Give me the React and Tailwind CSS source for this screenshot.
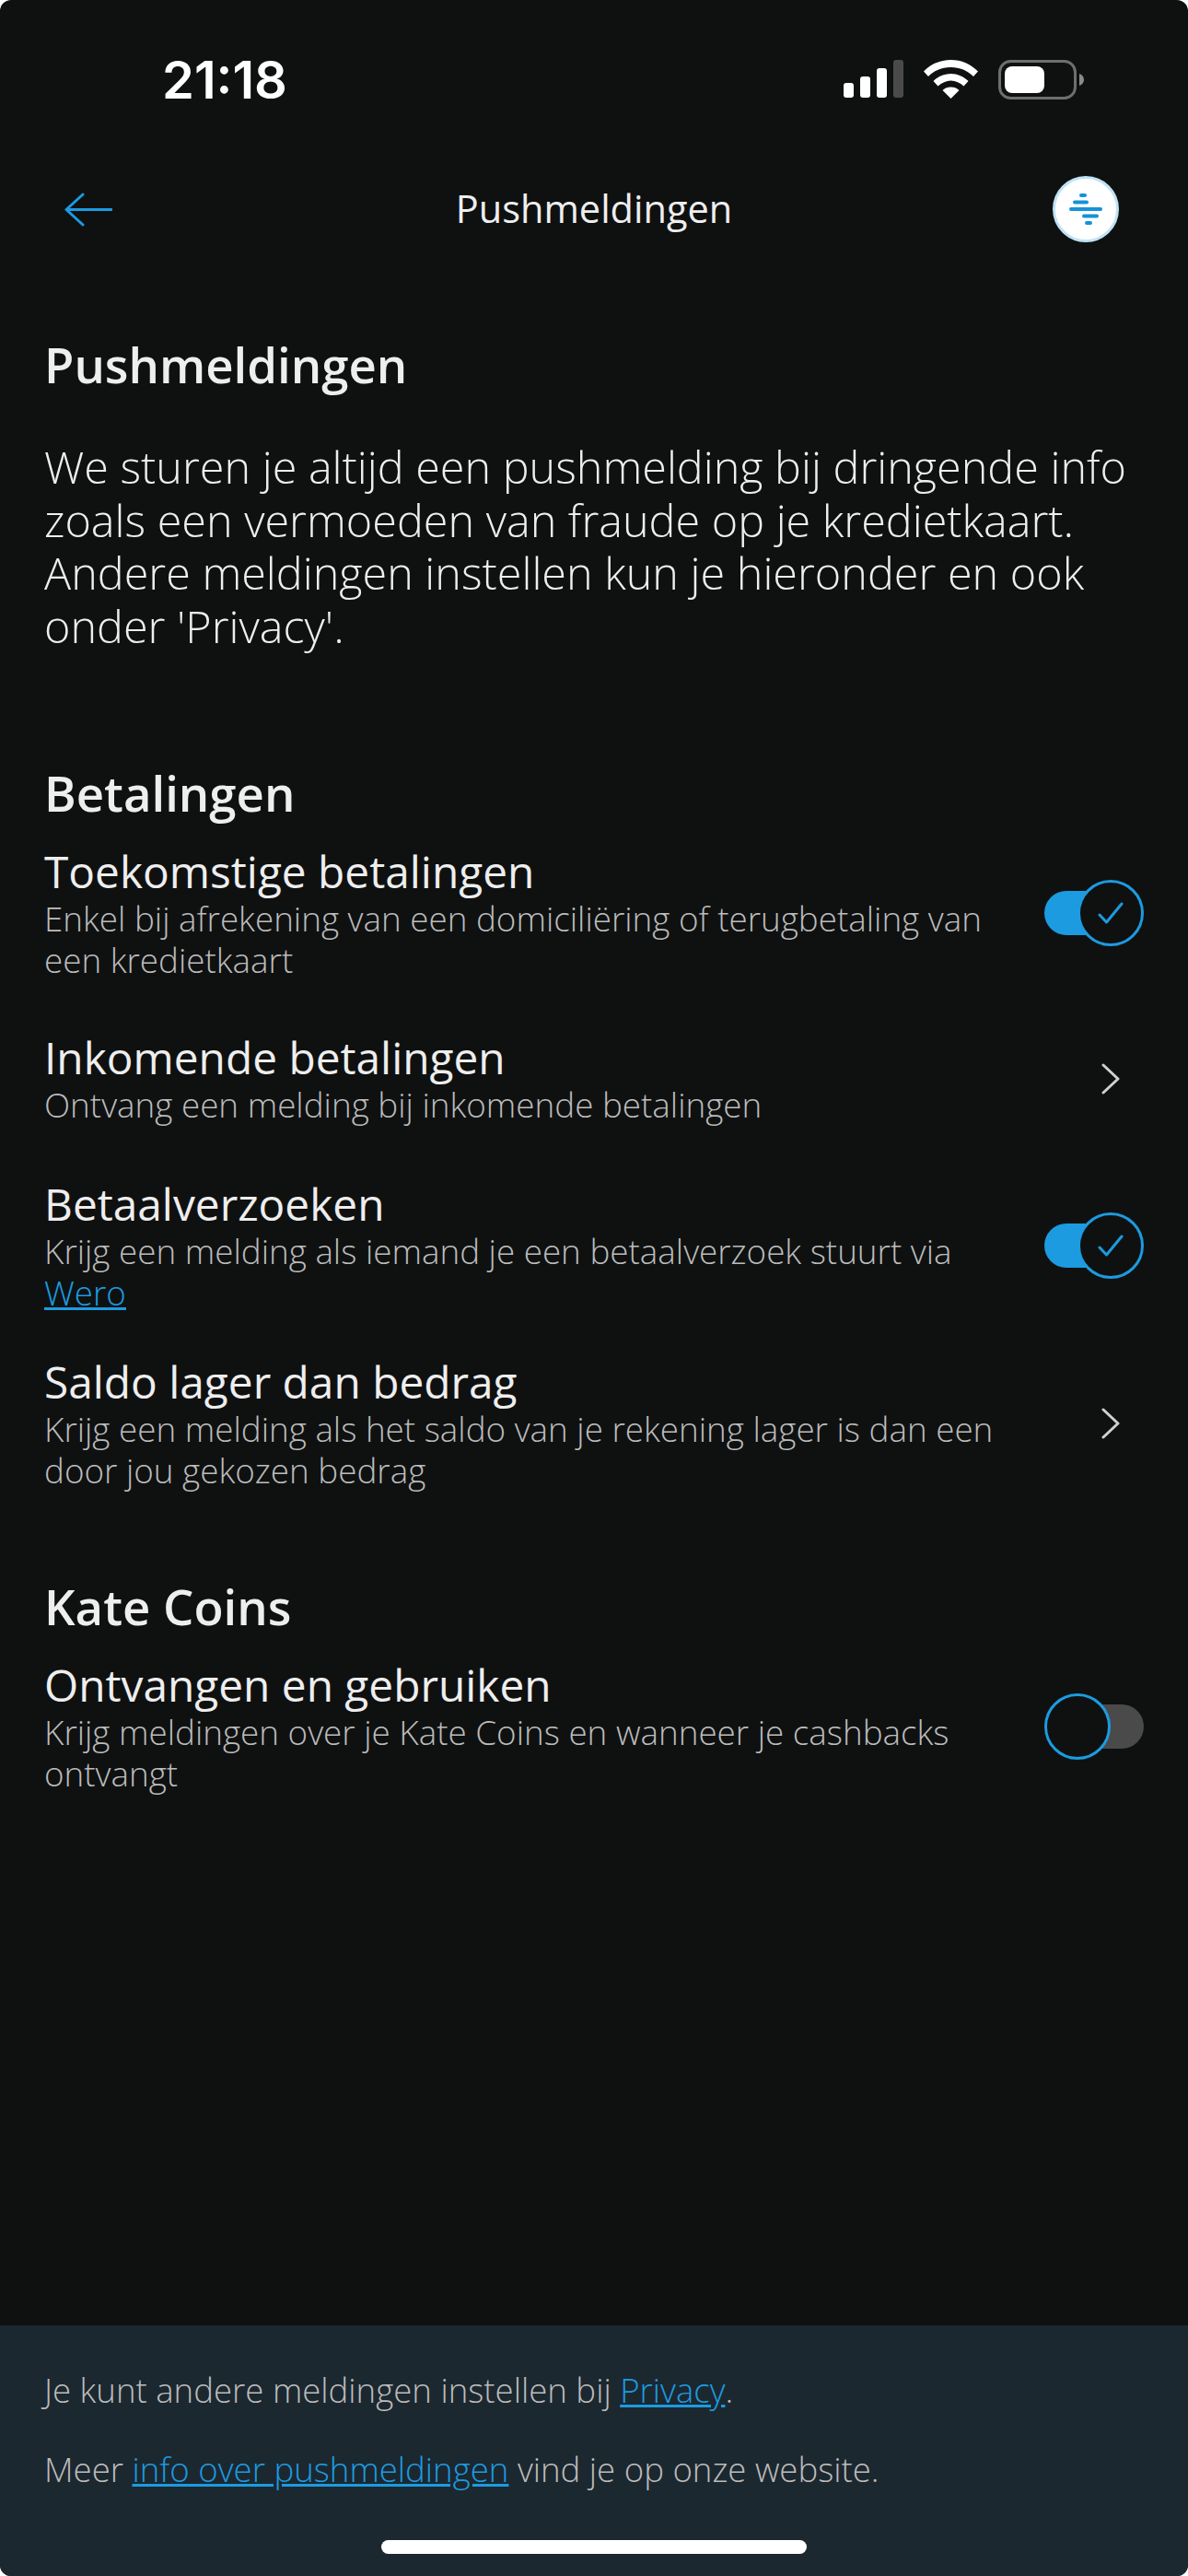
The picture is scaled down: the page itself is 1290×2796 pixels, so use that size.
import React from 'react';

function StatusBar() {
  return (
    <div className="h-[132px] pt-[58px] pl-[176px] pr-[113px] flex items-start justify-between">
      <span className="text-[56px] leading-[58px] font-semibold text-white font-['Inter',sans-serif]">21:18</span>
      <div className="flex items-start gap-[22px] pt-[7px]">
        <svg width="65" height="42" viewBox="0 0 65 42">
          <rect x="0" y="25" width="11" height="16" rx="3" fill="#fff" />
          <rect x="18" y="18" width="11" height="23" rx="3" fill="#fff" />
          <rect x="36" y="9" width="11" height="32" rx="3" fill="#fff" />
          <rect x="54" y="0" width="11" height="41" rx="3" fill="#4a4a4a" />
        </svg>
        <svg width="59" height="42" viewBox="0 0 59 42">
          <path d="M29.5 0C18 0 8 4.500 0 12.500L5 18C11.500 11.500 20 8 29.500 8C39 8 47.500 11.500 54 18L59 12.500C51 4.500 41 0 29.500 0Z" fill="#fff" />
          <path d="M29.500 15C22.500 15 15.500 18 10.500 23L15.500 28.500C19.500 25 24.500 22.500 29.500 22.500C34.500 22.500 39.500 25 43.500 28.500L48.500 23C43.500 18 36.500 15 29.500 15Z" fill="#fff" />
          <path d="M29.500 29.500C26 29.500 23 30.500 20.500 33L29.500 42L38.500 33C36 30.500 33 29.500 29.500 29.500Z" fill="#fff" />
        </svg>
        <svg width="93" height="43" viewBox="0 0 93 43">
          <rect x="1.500" y="1.500" width="82" height="40" rx="12" fill="none" stroke="#6e6e6e" strokeWidth="3" />
          <rect x="7" y="7" width="43" height="29" rx="8" fill="#fff" />
          <path d="M88 15C91 16 93 18.500 93 21.500C93 24.500 91 27 88 28Z" fill="#8a8a8a" />
        </svg>
      </div>
    </div>
  );
}

function NavBar() {
  return (
    <div className="h-[190px] grid grid-cols-[1fr_auto_1fr] items-center pl-[75px] pr-[75px]">
      <svg width="52" height="37" viewBox="0 0 52 37" fill="none" stroke="#1c9be0" strokeWidth="3" strokeLinecap="round" strokeLinejoin="round" className="ml-[-5px]">
        <path d="M2 18.500H51M20 2L2 18.500L20 35" />
      </svg>
      <span className="text-[41.500px] leading-[50px] text-[#eeeeee] mb-[3px]">Pushmeldingen</span>
      <div className="justify-self-end w-[72px] h-[72px] rounded-full bg-white border-[3px] border-[#bfe3f5] flex items-center justify-center">
        <svg width="36" height="34" viewBox="0 0 36 34">
          <rect x="11" y="0" width="8" height="4" rx="2" fill="#1592d8" />
          <rect x="4" y="7.500" width="17" height="4" rx="2" fill="#1592d8" />
          <rect x="0" y="15" width="36" height="4" rx="2" fill="#1592d8" />
          <rect x="14" y="22.500" width="18" height="4" rx="2" fill="#1592d8" />
          <rect x="17" y="30" width="8" height="4" rx="2" fill="#1592d8" />
        </svg>
      </div>
    </div>
  );
}

function Toggle({ on }) {
  return (
    <div className="w-[108px] h-[72px] relative shrink-0 mb-[5px]">
      <div className={on ? 'absolute left-0 top-[12px] w-[60px] h-[48px] rounded-l-full bg-[#1c9be0]' : 'absolute right-0 top-[12px] w-[60px] h-[48px] rounded-r-full bg-[#4a4a4a]'} />
      <div className={on ? 'absolute right-0 top-0 w-[72px] h-[72px] rounded-full border-[3px] border-[#1c9be0] bg-[#0f1111] flex items-center justify-center' : 'absolute left-0 top-0 w-[72px] h-[72px] rounded-full border-[3px] border-[#1c9be0] bg-[#0f1111]'}>
        {on && (
          <svg width="28" height="26" viewBox="0 0 28 26" fill="none" stroke="#1c9be0" strokeWidth="3" strokeLinecap="round" strokeLinejoin="round">
            <path d="M2 15L9.500 23L26 3" />
          </svg>
        )}
      </div>
    </div>
  );
}

function Row({ title, children, control, className }) {
  return (
    <div className={'flex items-center justify-between ' + className}>
      <div>
        <div className="text-[47.800px] leading-[50px] text-[#eeeeee]">{title}</div>
        <div className="text-[36.800px] leading-[45px] text-[#bcbcbc] font-light mt-[4px]">{children}</div>
      </div>
      {control}
    </div>
  );
}

function Chevron() {
  return (
    <svg width="20" height="34" viewBox="0 0 20 34" fill="none" stroke="#d0d0d0" strokeWidth="3" strokeLinecap="round" strokeLinejoin="round" className="mr-[26px] mb-[4px]">
      <path d="M2 2L18 17L2 32" />
    </svg>
  );
}

function App() {
  return (
    <div className="w-[1290px] h-[2796px] bg-white">
      <div className="h-full flex flex-col bg-[#0f1111] font-['Open_Sans',sans-serif] overflow-hidden rounded-[12px]">
        <StatusBar />
        <NavBar />
        <main className="flex-1 px-[48px]">
          <h1 className="text-[52.700px] leading-[60px] font-semibold text-[#eeeeee] mt-[44px]">Pushmeldingen</h1>
          <p className="text-[48.500px] leading-[57.500px] text-[#eeeeee] font-light mt-[52px]">
            We sturen je altijd een pushmelding bij dringende info<br />
            zoals een vermoeden van fraude op je kredietkaart.<br />
            Andere meldingen instellen kun je hieronder en ook<br />
            onder 'Privacy'.
          </p>
          <h2 className="text-[52.700px] leading-[60px] font-semibold text-[#eeeeee] mt-[123px]">Betalingen</h2>
          <Row title="Toekomstige betalingen" control={<Toggle on />} className="mt-[30px]">
            Enkel bij afrekening van een domiciliëring of terugbetaling van<br />een kredietkaart
          </Row>
          <Row title="Inkomende betalingen" control={<Chevron />} className="mt-[58px]">
            Ontvang een melding bij inkomende betalingen
          </Row>
          <Row title="Betaalverzoeken" control={<Toggle on />} className="mt-[60px]">
            Krijg een melding als iemand je een betaalverzoek stuurt via<br /><a className="text-[#1c9be0] underline">Wero</a>
          </Row>
          <Row title="Saldo lager dan bedrag" control={<Chevron />} className="mt-[49px]">
            Krijg een melding als het saldo van je rekening lager is dan een<br />door jou gekozen bedrag
          </Row>
          <h2 className="text-[52.700px] leading-[60px] font-semibold text-[#eeeeee] mt-[95px]">Kate Coins</h2>
          <Row title="Ontvangen en gebruiken" control={<Toggle />} className="mt-[30px]">
            Krijg meldingen over je Kate Coins en wanneer je cashbacks<br />ontvangt
          </Row>
        </main>
        <footer className="h-[272px] bg-[#1c2830] px-[48px] pt-[48px] text-[36.600px] leading-[45px] text-[#bcbcbc] font-light flex flex-col items-start">
          <p>Je kunt andere meldingen instellen bij <a className="text-[#1c9be0] underline">Privacy</a>.</p>
          <p className="mt-[41px]">Meer <a className="text-[#1c9be0] underline">info over pushmeldingen</a> vind je op onze website.</p>
          <div className="self-center w-[462px] h-[15px] rounded-full bg-white mt-[54px]" />
        </footer>
      </div>
    </div>
  );
}

export default App;
